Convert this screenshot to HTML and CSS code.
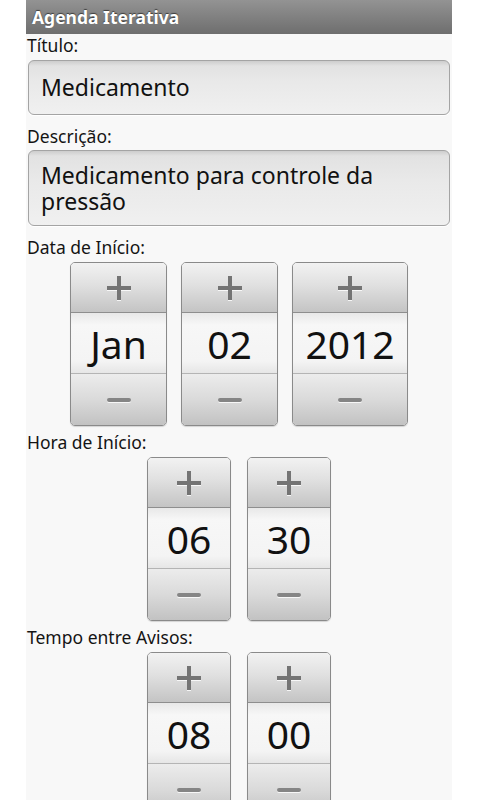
FILE: index.html
```html
<!DOCTYPE html>
<html lang="pt">
<head>
    <meta charset="UTF-8">
    <meta name="viewport" content="width=device-width, initial-scale=1.0">
    <title>Agenda Iterativa</title>
    <link rel="stylesheet" href="styles.css">
</head>
<body>
    <div class="screen">
        <header class="title-bar">Agenda Iterativa</header>

        <div class="form">
            <div class="label">Título:</div>
            <div class="field">Medicamento</div>

            <div class="label">Descrição:</div>
            <div class="field field-multi">Medicamento para controle da pressão</div>

            <div class="label">Data de Início:</div>
            <div class="pickers">
                <div class="picker">
                    <div class="step step-plus"><svg width="24" height="24" viewBox="0 0 24 24"><path d="M10 0h4v10h10v4H14v10h-4V14H0v-4h10z"/></svg></div>
                    <div class="value">Jan</div>
                    <div class="step step-minus"><svg width="24" height="6" viewBox="0 0 24 6"><rect x="0" y="1" width="24" height="4" rx="2"/></svg></div>
                </div>
                <div class="picker">
                    <div class="step step-plus"><svg width="24" height="24" viewBox="0 0 24 24"><path d="M10 0h4v10h10v4H14v10h-4V14H0v-4h10z"/></svg></div>
                    <div class="value">02</div>
                    <div class="step step-minus"><svg width="24" height="6" viewBox="0 0 24 6"><rect x="0" y="1" width="24" height="4" rx="2"/></svg></div>
                </div>
                <div class="picker picker-year">
                    <div class="step step-plus"><svg width="24" height="24" viewBox="0 0 24 24"><path d="M10 0h4v10h10v4H14v10h-4V14H0v-4h10z"/></svg></div>
                    <div class="value">2012</div>
                    <div class="step step-minus"><svg width="24" height="6" viewBox="0 0 24 6"><rect x="0" y="1" width="24" height="4" rx="2"/></svg></div>
                </div>
            </div>

            <div class="label">Hora de Início:</div>
            <div class="pickers pickers-time">
                <div class="picker">
                    <div class="step step-plus"><svg width="24" height="24" viewBox="0 0 24 24"><path d="M10 0h4v10h10v4H14v10h-4V14H0v-4h10z"/></svg></div>
                    <div class="value">06</div>
                    <div class="step step-minus"><svg width="24" height="6" viewBox="0 0 24 6"><rect x="0" y="1" width="24" height="4" rx="2"/></svg></div>
                </div>
                <div class="picker">
                    <div class="step step-plus"><svg width="24" height="24" viewBox="0 0 24 24"><path d="M10 0h4v10h10v4H14v10h-4V14H0v-4h10z"/></svg></div>
                    <div class="value">30</div>
                    <div class="step step-minus"><svg width="24" height="6" viewBox="0 0 24 6"><rect x="0" y="1" width="24" height="4" rx="2"/></svg></div>
                </div>
            </div>

            <div class="label">Tempo entre Avisos:</div>
            <div class="pickers pickers-time">
                <div class="picker">
                    <div class="step step-plus"><svg width="24" height="24" viewBox="0 0 24 24"><path d="M10 0h4v10h10v4H14v10h-4V14H0v-4h10z"/></svg></div>
                    <div class="value">08</div>
                    <div class="step step-minus"><svg width="24" height="6" viewBox="0 0 24 6"><rect x="0" y="1" width="24" height="4" rx="2"/></svg></div>
                </div>
                <div class="picker">
                    <div class="step step-plus"><svg width="24" height="24" viewBox="0 0 24 24"><path d="M10 0h4v10h10v4H14v10h-4V14H0v-4h10z"/></svg></div>
                    <div class="value">00</div>
                    <div class="step step-minus"><svg width="24" height="6" viewBox="0 0 24 6"><rect x="0" y="1" width="24" height="4" rx="2"/></svg></div>
                </div>
            </div>
        </div>
    </div>
</body>
</html>
```

FILE: styles.css
```css
body {
    margin: 0;
    background-color: #ffffff;
    font-family: 'Noto Sans', 'Open Sans', sans-serif;
    color: #141414;
    overflow: hidden;
}

/* Tela do app (com margem branca dos lados) */
.screen {
    margin: 0 28px 0 26px;
    min-height: 800px;
    background-color: #f8f8f8;
}

.title-bar {
    height: 34px;
    line-height: 34px;
    padding-left: 6px;
    background: linear-gradient(#939393, #6e6e6e);
    color: #ffffff;
    font-size: 17.5px;
    font-weight: bold;
    text-shadow: 0 -1px 1px rgba(0, 0, 0, 0.55);
}

.label {
    padding-left: 1px;
    font-size: 17.5px;
    line-height: 22px;
}

/* Campos de texto */
.field {
    margin: 4px 2px 10px;
    padding: 13px 12px 14px;
    border: 1px solid #a4a4a4;
    border-radius: 6px;
    background: linear-gradient(#cdcdcd 0, #e2e2e2 5px, #e9e9e9 40%, #f0f0f0 100%);
    box-shadow: 0 1px 0 #ffffff;
    font-size: 23px;
    line-height: 26px;
    color: #111;
}

.field-multi {
    margin-top: 3px;
    padding: 11px 12px;
}

/* Seletores de data/hora */
.pickers {
    display: flex;
    justify-content: center;
    gap: 14px;
    margin: 4px 0 5px;
}

.picker {
    box-sizing: border-box;
    width: 97px;
    height: 164px;
    display: flex;
    flex-direction: column;
    border: 1px solid #8a8a8a;
    border-radius: 5px;
    overflow: hidden;
    box-shadow: 0 1px 1px rgba(0, 0, 0, 0.15);
}

.picker-year {
    width: 116px;
}

.pickers-time {
    gap: 16px;
}

.pickers-time .picker {
    width: 84px;
}

.step {
    display: flex;
    align-items: center;
    justify-content: center;
}

.step svg {
    fill: #747474;
    filter: drop-shadow(0 1px 0 rgba(255, 255, 255, 0.8));
}

.step-plus {
    height: 49px;
    background: linear-gradient(#f2f2f2, #e0e0e0 45%, #c4c4c4);
    border-bottom: 1px solid #8e8e8e;
}

.step-minus {
    height: 51px;
    background: linear-gradient(#ececec, #dadada 50%, #c2c2c2);
    border-top: 1px solid #b4b4b4;
}

.step-minus svg {
    fill: #858585;
}

.value {
    flex: 1;
    display: flex;
    align-items: center;
    justify-content: center;
    background: linear-gradient(#e8e8e8, #f7f7f7 20%, #f4f4f4 80%, #e6e6e6);
    font-size: 39px;
    color: #111;
}
```
